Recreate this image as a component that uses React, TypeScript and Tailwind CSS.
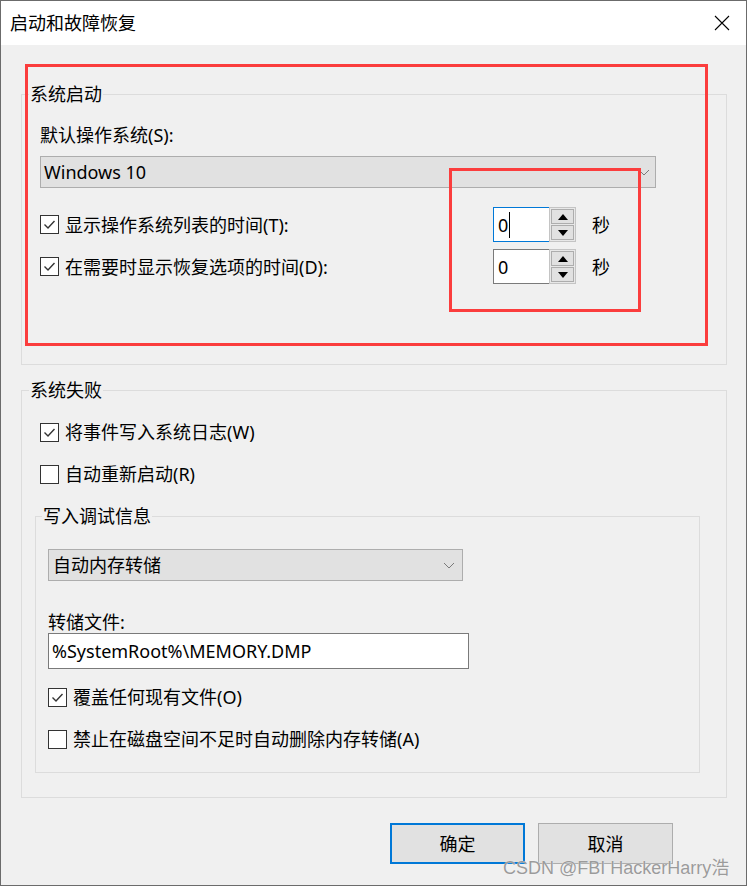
import * as React from "react";

const font = "font-['Noto_Sans','Noto_Sans_CJK_SC',sans-serif]";

function Check({ checked }: { checked?: boolean }) {
  return (
    <span className="flex h-[19px] w-[19px] shrink-0 items-center justify-center border border-[#333] bg-white">
      {checked && (
        <svg width="15" height="15" viewBox="0 0 15 15">
          <polyline points="2.5,7.5 6,11 12.5,4" fill="none" stroke="#333" strokeWidth="1.4" />
        </svg>
      )}
    </span>
  );
}

function CheckRow({ checked, label, className }: { checked?: boolean; label: string; className?: string }) {
  return (
    <div className={"flex h-[24px] items-center gap-[6px] " + (className ?? "")}>
      <Check checked={checked} />
      <span className="leading-[24px]">{label}</span>
    </div>
  );
}

function Chevron() {
  return (
    <svg width="12" height="7" viewBox="0 0 12 7">
      <polyline points="1,1 6,6 11,1" fill="none" stroke="#7a7a7a" strokeWidth="1" />
    </svg>
  );
}

function Arrow({ up }: { up?: boolean }) {
  return (
    <svg width="10" height="6" viewBox="0 0 10 6">
      <polygon points={up ? "0,6 10,6 5,0" : "0,0 10,0 5,6"} fill="#000" />
    </svg>
  );
}

function Spin({ focused }: { focused?: boolean }) {
  return (
    <div className="flex h-[35px]">
      <div
        className={
          "flex w-[56px] items-center border border-r-0 bg-white pl-[4px] " +
          (focused ? "border-[#0078d7]" : "border-[#7a7a7a]")
        }
      >
        <span className="leading-[24px]">0</span>
        {focused && <span className="ml-px h-[26px] w-px bg-black" />}
      </div>
      <div className="flex w-[27px] flex-col gap-px border border-[#c4c4c4] bg-[#e8e8e8] p-px">
        <div className="flex flex-1 items-center justify-center border border-[#adadad] bg-[#e1e1e1]">
          <Arrow up />
        </div>
        <div className="flex flex-1 items-center justify-center border border-[#adadad] bg-[#e1e1e1]">
          <Arrow />
        </div>
      </div>
    </div>
  );
}

function SpinRow({ checked, label, focused, className }: { checked?: boolean; label: string; focused?: boolean; className?: string }) {
  return (
    <div className={"flex h-[35px] items-center " + (className ?? "")}>
      <div className="flex w-[453px] items-center gap-[6px]">
        <Check checked={checked} />
        <span className="leading-[24px]">{label}</span>
      </div>
      <Spin focused={focused} />
      <span className="ml-[16px] leading-[24px]">秒</span>
    </div>
  );
}

export default function App() {
  return (
    <div className={"relative flex h-[886px] w-[747px] flex-col overflow-hidden border border-[#6b6b6b] bg-[#f0f0f0] text-[18px] text-black " + font}>
      {/* title bar */}
      <div className="flex h-[44px] shrink-0 items-center justify-between bg-white pl-[9px] pr-[16px]">
        <span className="leading-[24px]">启动和故障恢复</span>
        <svg width="16" height="16" viewBox="0 0 16 16">
          <path d="M1 1 L15 15 M15 1 L1 15" stroke="#000" strokeWidth="1.1" />
        </svg>
      </div>

      {/* 系统启动 */}
      <fieldset className="ml-[20px] mt-[37px] w-[706px] border border-[#dcdcdc] p-0">
        <legend className="ml-[7px] px-[1px] leading-[24px]">系统启动</legend>
        <div className="pb-[80px] pl-[18px]">
          <div className="mt-[17px] leading-[24px]">默认操作系统(S):</div>
          <div className="mt-[9px] flex h-[32px] w-[616px] items-center justify-between border border-[#adadad] bg-[#e1e1e1] pl-[3px] pr-[5px]">
            <span className="leading-[24px]">Windows 10</span>
            <Chevron />
          </div>
          <SpinRow className="mt-[19px]" checked focused label="显示操作系统列表的时间(T):" />
          <SpinRow className="mt-[7px]" checked label="在需要时显示恢复选项的时间(D):" />
        </div>
      </fieldset>

      {/* 系统失败 */}
      <fieldset className="ml-[20px] mt-[13px] w-[706px] border border-[#dcdcdc] p-0">
        <legend className="ml-[7px] px-[1px] leading-[24px]">系统失败</legend>
        <div className="pb-[24px] pl-[13px]">
          <CheckRow className="ml-[5px] mt-[18px]" checked label="将事件写入系统日志(W)" />
          <CheckRow className="ml-[5px] mt-[18px]" label="自动重新启动(R)" />

          <fieldset className="mt-[18px] w-[665px] border border-[#dcdcdc] p-0">
            <legend className="ml-[6px] px-[1px] leading-[24px]">写入调试信息</legend>
            <div className="pb-[21px] pl-[12px]">
              <div className="mt-[21px] flex h-[32px] w-[415px] items-center justify-between border border-[#adadad] bg-[#e1e1e1] pl-[4px] pr-[7px]">
                <span className="leading-[24px]">自动内存转储</span>
                <Chevron />
              </div>
              <div className="mt-[30px] leading-[22px]">转储文件:</div>
              <div className="flex h-[36px] w-[421px] items-center border border-[#7a7a7a] bg-white pl-[3px]">
                <span className="leading-[24px]">%SystemRoot%\MEMORY.DMP</span>
              </div>
              <CheckRow className="mt-[16px]" checked label="覆盖任何现有文件(O)" />
              <CheckRow className="mt-[18px]" label="禁止在磁盘空间不足时自动删除内存转储(A)" />
            </div>
          </fieldset>
        </div>
      </fieldset>

      {/* buttons */}
      <div className="mt-[25px] flex justify-end gap-[13px] pr-[73px]">
        <button className="flex h-[41px] w-[135px] items-center justify-center border-2 border-[#0078d7] bg-[#e1e1e1] leading-[24px]">
          确定
        </button>
        <button className="flex h-[41px] w-[135px] items-center justify-center border border-[#adadad] bg-[#e1e1e1] leading-[24px]">
          取消
        </button>
      </div>

      {/* annotation boxes */}
      <div className="pointer-events-none absolute left-[24px] top-[63px] h-[282px] w-[683px] border-[3px] border-[#fb3d3d]" />
      <div className="pointer-events-none absolute left-[448px] top-[167px] h-[144px] w-[192px] border-[3px] border-[#fb3d3d]" />

      {/* watermark */}
      <div className="pointer-events-none absolute left-[502px] top-[855px] whitespace-nowrap font-['Liberation_Sans','Noto_Sans_CJK_SC',sans-serif] text-[18px] leading-[24px] text-[#9b9b9b] [text-shadow:0_0_1px_#ffffff]">
        CSDN @FBI HackerHarry浩
      </div>
    </div>
  );
}
